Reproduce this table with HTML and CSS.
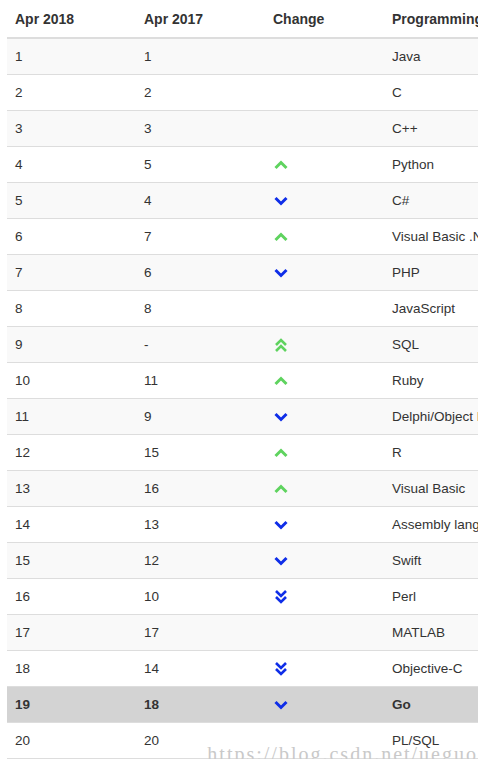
FILE: index.html
```html
<!DOCTYPE html>
<html>
<head>
<meta charset="utf-8">
<link rel="stylesheet" href="styles.css">
</head>
<body>
<svg width="0" height="0" class="defs">
  <defs>
    <symbol id="up" viewBox="0 0 14 14"><path d="M1.5 10 L7 4.5 L12.5 10" fill="none" stroke="currentColor" stroke-width="3"/></symbol>
    <symbol id="down" viewBox="0 0 14 14"><path d="M1.5 4 L7 9.5 L12.5 4" fill="none" stroke="currentColor" stroke-width="3"/></symbol>
    <symbol id="up2" viewBox="0 0 14 14"><path d="M2 7 L7 2 L12 7 M2 13 L7 8 L12 13" fill="none" stroke="currentColor" stroke-width="2.6"/></symbol>
    <symbol id="down2" viewBox="0 0 14 14"><path d="M2 1 L7 6 L12 1 M2 7 L7 12 L12 7" fill="none" stroke="currentColor" stroke-width="2.6"/></symbol>
  </defs>
</svg>
<div class="page">
  <div class="wrap">
    <table class="rank">
      <thead>
        <tr><th class="c1">Apr 2018</th><th class="c2">Apr 2017</th><th class="c3">Change</th><th class="c4">Programming Language</th></tr>
      </thead>
      <tbody>
        <tr><td>1</td><td>1</td><td></td><td>Java</td></tr>
        <tr><td>2</td><td>2</td><td></td><td>C</td></tr>
        <tr><td>3</td><td>3</td><td></td><td>C++</td></tr>
        <tr><td>4</td><td>5</td><td><svg class="ic up"><use href="#up"/></svg></td><td>Python</td></tr>
        <tr><td>5</td><td>4</td><td><svg class="ic down"><use href="#down"/></svg></td><td>C#</td></tr>
        <tr><td>6</td><td>7</td><td><svg class="ic up"><use href="#up"/></svg></td><td>Visual Basic .NET</td></tr>
        <tr><td>7</td><td>6</td><td><svg class="ic down"><use href="#down"/></svg></td><td>PHP</td></tr>
        <tr><td>8</td><td>8</td><td></td><td>JavaScript</td></tr>
        <tr><td>9</td><td>-</td><td><svg class="ic up"><use href="#up2"/></svg></td><td>SQL</td></tr>
        <tr><td>10</td><td>11</td><td><svg class="ic up"><use href="#up"/></svg></td><td>Ruby</td></tr>
        <tr><td>11</td><td>9</td><td><svg class="ic down"><use href="#down"/></svg></td><td>Delphi/Object Pascal</td></tr>
        <tr><td>12</td><td>15</td><td><svg class="ic up"><use href="#up"/></svg></td><td>R</td></tr>
        <tr><td>13</td><td>16</td><td><svg class="ic up"><use href="#up"/></svg></td><td>Visual Basic</td></tr>
        <tr><td>14</td><td>13</td><td><svg class="ic down"><use href="#down"/></svg></td><td>Assembly language</td></tr>
        <tr><td>15</td><td>12</td><td><svg class="ic down"><use href="#down"/></svg></td><td>Swift</td></tr>
        <tr><td>16</td><td>10</td><td><svg class="ic down"><use href="#down2"/></svg></td><td>Perl</td></tr>
        <tr><td>17</td><td>17</td><td></td><td>MATLAB</td></tr>
        <tr><td>18</td><td>14</td><td><svg class="ic down"><use href="#down2"/></svg></td><td>Objective-C</td></tr>
        <tr class="hl"><td>19</td><td>18</td><td><svg class="ic down"><use href="#down"/></svg></td><td>Go</td></tr>
        <tr><td>20</td><td>20</td><td></td><td>PL/SQL</td></tr>
      </tbody>
    </table>
  </div>
  <div class="mark">https://blog.csdn.net/ueguo</div>
</div>
</body>
</html>
```
FILE: styles.css
```css
html, body { margin: 0; padding: 0; background: #fff; }
body { font-family: "Liberation Sans", Arial, sans-serif; color: #333; }
.defs { position: absolute; width: 0; height: 0; }
.page { position: relative; }
.wrap { margin: 0 11px 0 7px; overflow: hidden; }
.rank { border-collapse: collapse; border-spacing: 0; width: 620px; table-layout: fixed; font-size: 13.5px; }
.rank th { text-align: left; font-weight: bold; font-size: 14px; height: 38px; padding: 0 8px; border-bottom: 2px solid #ddd; white-space: nowrap; overflow: hidden; box-sizing: border-box; }
.c1, .c2 { width: 129px; }
.c3 { width: 119px; }
.c4 { width: 243px; }
.rank td { height: 35px; padding: 0 8px; border-bottom: 1px solid #ddd; white-space: nowrap; line-height: 19px; vertical-align: middle; }
.rank tbody tr:nth-child(odd) td { background: #f9f9f9; }
.rank tbody tr.hl td { background: #d3d3d3; font-weight: bold; }
.ic { width: 14px; height: 14px; display: block; margin-left: 1px; }
.up { color: #5fd35f; }
.down { color: #0f2ee8; }
.mark { position: absolute; right: 11px; bottom: -7px; font-family: "Liberation Serif", "Times New Roman", serif; font-size: 20px; line-height: 24px; color: #c9c9c9; letter-spacing: 2px; white-space: nowrap; pointer-events: none; }
```
